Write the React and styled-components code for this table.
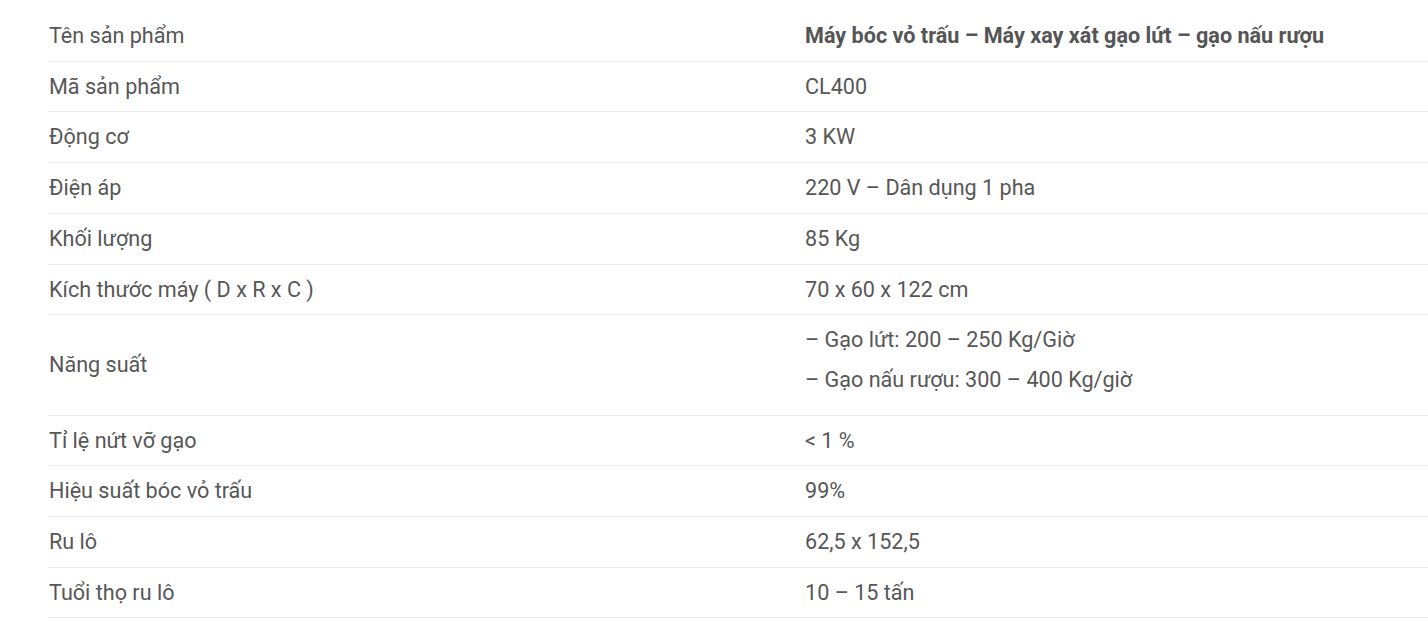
import React from 'react';
import styled, { createGlobalStyle } from 'styled-components';

const GlobalStyle = createGlobalStyle`
  html, body {
    margin: 0;
    padding: 0;
    background: #fff;
    overflow: hidden;
  }
  body {
    font-family: Roboto, "Liberation Sans", sans-serif;
  }
`;

const Wrapper = styled.div`
  padding: 11px 0 0 48px;
  width: 1600px;
`;

const Bang = styled.table`
  width: 1512px;
  border-collapse: collapse;
  table-layout: fixed;
  font-size: 21.6px;
  line-height: 29.7px;
  color: #575757;
`;

const Dong = styled.tr`
  border-bottom: 1px solid #ececec;
`;

const O = styled.td`
  padding: 10px 0 10px 1px;
  vertical-align: middle;
  width: ${(p) => (p.$trai ? '755px' : 'auto')};
`;

const TieuDe = styled.strong`
  font-weight: 700;
  color: #555;
`;

const Dong2 = styled.p`
  margin: 0 0 10px;
`;

const thongSo = [
  ['Mã sản phẩm', 'CL400'],
  ['Động cơ', '3 KW'],
  ['Điện áp', '220 V – Dân dụng 1 pha'],
  ['Khối lượng', '85 Kg'],
  ['Kích thước máy ( D x R x C )', '70 x 60 x 122 cm'],
  ['Năng suất', ['– Gạo lứt: 200 – 250 Kg/Giờ', '– Gạo nấu rượu: 300 – 400 Kg/giờ']],
  ['Tỉ lệ nứt vỡ gạo', '< 1 %'],
  ['Hiệu suất bóc vỏ trấu', '99%'],
  ['Ru lô', '62,5 x 152,5'],
  ['Tuổi thọ ru lô', '10 – 15 tấn'],
];

const App = () => {
  return (
    <Wrapper>
      <GlobalStyle />
      <Bang>
        <tbody>
          <Dong>
            <O $trai>Tên sản phẩm</O>
            <O>
              <TieuDe>Máy bóc vỏ trấu – Máy xay xát gạo lứt – gạo nấu rượu</TieuDe>
            </O>
          </Dong>
          {thongSo.map(([ten, giaTri]) => (
            <Dong key={ten}>
              <O $trai>{ten}</O>
              <O>
                {Array.isArray(giaTri)
                  ? giaTri.map((d) => <Dong2 key={d}>{d}</Dong2>)
                  : giaTri}
              </O>
            </Dong>
          ))}
        </tbody>
      </Bang>
    </Wrapper>
  );
};

export default App;
